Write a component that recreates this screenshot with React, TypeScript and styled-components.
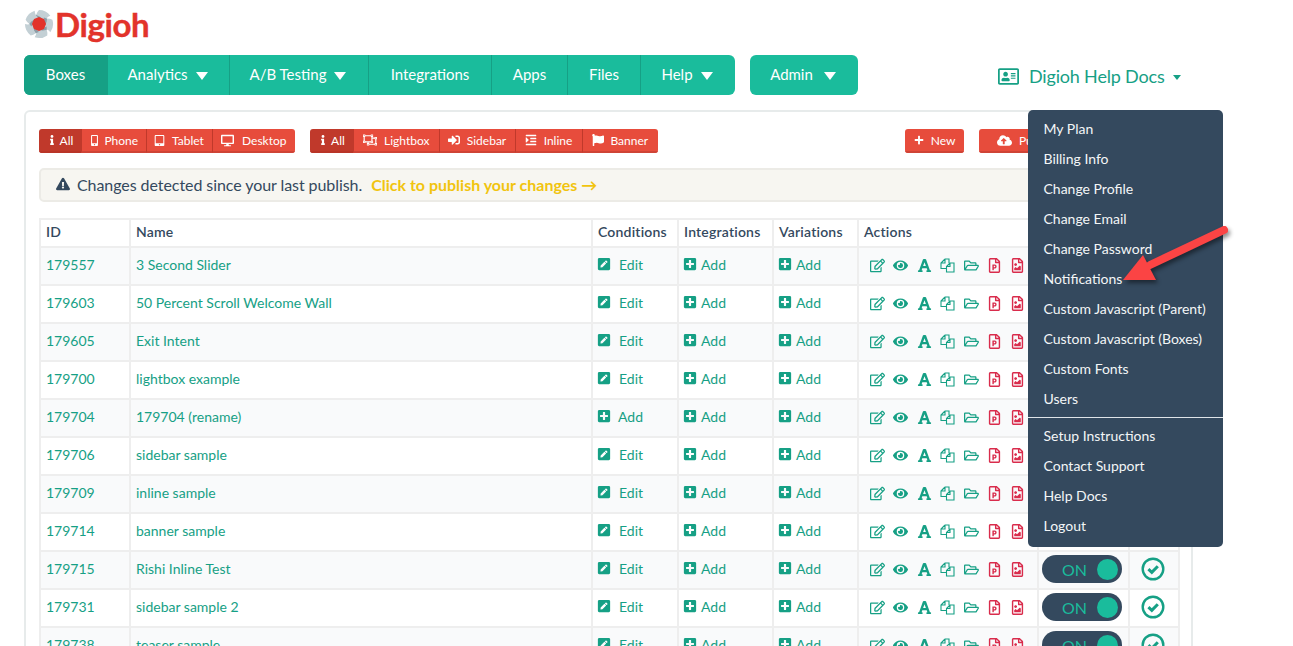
import React from 'react'
import styled, { createGlobalStyle } from 'styled-components'
import {
    FaCloudUploadAlt,
    FaDesktop,
    FaExclamationTriangle,
    FaEye,
    FaFlag,
    FaFont,
    FaIndent,
    FaInfo,
    FaMobileAlt,
    FaPenSquare,
    FaPlus,
    FaPlusSquare,
    FaRegAddressCard,
    FaRegEdit,
    FaRegFileImage,
    FaRegFilePowerpoint,
    FaRegFolderOpen,
    FaRegObjectUngroup,
    FaSignInAlt,
    FaTabletAlt,
} from 'react-icons/fa'

const GlobalStyle = createGlobalStyle`
    html, body {
        margin: 0;
        padding: 0;
        background: #fff;
        font-family: Lato, "Liberation Sans", sans-serif;
        color: #34495e;
    }
`

const Page = styled.div`
    position: relative;
    height: 646px;
    padding: 0 24px;
    overflow: hidden;
    box-sizing: border-box;
`

const LogoRow = styled.div`
    display: flex;
    align-items: center;
    height: 55px;
    gap: 1px;
    padding-bottom: 7px;
    box-sizing: border-box;
`

const LogoText = styled.span`
    font-size: 33px;
    font-weight: 700;
    color: #e2332b;
    letter-spacing: -0.4px;
    -webkit-text-stroke: 0.4px #e2332b;
`

const NavRow = styled.div`
    display: flex;
    height: 40px;
    margin-bottom: 15px;
`

const NavBar = styled.nav<{ $gap?: number }>`
    display: flex;
    margin-left: ${(props) => props.$gap ?? 0}px;
    border-radius: 6px;
    overflow: hidden;
    background: #1abc9c;
`

const NavItem = styled.a<{ $active?: boolean; $width: number; $gap?: number }>`
    display: flex;
    align-items: center;
    justify-content: center;
    gap: ${(props) => props.$gap ?? 8}px;
    width: ${(props) => props.$width}px;
    padding-bottom: 2px;
    box-sizing: border-box;
    font-size: 15px;
    color: #fff;
    background: ${(props) => (props.$active ? '#16a085' : 'transparent')};
    border-left: 1px solid ${(props) => (props.$active ? 'transparent' : '#16a085')};

    &:first-child {
        border-left: 0;
    }
`

const NavCaret = styled.span`
    width: 0;
    height: 0;
    margin-top: 3px;
    margin-right: 2px;
    border-left: 6px solid transparent;
    border-right: 6px solid transparent;
    border-top: 8px solid #fff;
`

const HelpWrap = styled.div`
    position: relative;
    display: flex;
    align-items: center;
    margin-left: 140px;
    padding-top: 2px;
    gap: 10px;
    color: #16a085;
    font-size: 18px;
    letter-spacing: -0.18px;
`

const HelpCaret = styled(NavCaret)`
    margin-left: -2px;
    margin-right: 0;
    margin-top: 2px;
    border-left-width: 4.5px;
    border-right-width: 4.5px;
    border-top: 5.5px solid #16a085;
`

const DropMenu = styled.ul`
    position: absolute;
    top: 55px;
    left: 30px;
    z-index: 3;
    width: 195px;
    height: 437px;
    margin: 0;
    padding: 4px 0 0;
    box-sizing: border-box;
    list-style: none;
    background: #34495e;
    border-radius: 5px;
    letter-spacing: 0;
`

const DropItem = styled.li`
    height: 30px;
    line-height: 30px;
    padding-left: 15.5px;
    font-size: 14px;
    color: #f3f6f7;
`

const DropDivider = styled.li`
    height: 1px;
    margin: 3px 0 3px;
    background: #dfe4e8;
`

const Panel = styled.section`
    width: 1169px;
    height: 560px;
    padding: 17px 13px;
    box-sizing: border-box;
    border: 2px solid #e7ebeb;
    border-radius: 6px;
`

const FilterRow = styled.div`
    display: flex;
    gap: 15px;
    margin-bottom: 15px;
`

const ButtonGroup = styled.div<{ $push?: number }>`
    display: flex;
    height: 24px;
    margin-left: ${(props) => props.$push ?? 0}px;
    border-radius: 3px;
    overflow: hidden;
`

const FilterButton = styled.a<{ $active?: boolean; $width: number; $gap?: number }>`
    display: flex;
    align-items: center;
    justify-content: center;
    gap: ${(props) => props.$gap ?? 7}px;
    width: ${(props) => props.$width}px;
    box-sizing: border-box;
    font-size: 12px;
    color: #fff;
    background: ${(props) => (props.$active ? '#c0392b' : '#e74c3c')};
    border-left: 1px solid #c0392b;
    border-bottom: 2px solid ${(props) => (props.$active ? '#b93527' : '#cf4436')};

    &:first-child {
        border-left: 0;
    }
`

const Notice = styled.div`
    display: flex;
    align-items: center;
    height: 34px;
    margin-bottom: 16px;
    padding: 0 0 2px 15px;
    gap: 7px;
    box-sizing: border-box;
    background: #f7f6f1;
    border: 2px solid #ecebe6;
    border-radius: 5px;
    font-size: 16px;
    letter-spacing: -0.07px;
`

const NoticeLink = styled.a`
    margin-left: 2px;
    font-weight: 700;
    letter-spacing: 0;
    color: #f1c40f;
`

const Grid = styled.table`
    width: 1139px;
    table-layout: fixed;
    border-collapse: collapse;
    font-size: 14px;

    th, td {
        border: 2px solid #eeeeee;
        padding: 0 5px;
        text-align: left;
        white-space: nowrap;
        box-sizing: border-box;
    }

    th {
        height: 28px;
        padding-bottom: 4px;
        font-weight: 600;
        letter-spacing: 0.2px;
        color: #34495e;
    }

    td {
        height: 38px;
        padding-bottom: 2px;
        color: #16a085;
    }

    tbody tr:nth-child(odd) td {
        background: #f9fafb;
    }
`

const RowText = styled.span`
    display: block;
    margin-bottom: 2px;
`

const CellLink = styled.span<{ $gap: number }>`
    display: inline-flex;
    align-items: center;
    gap: ${(props) => props.$gap}px;
    margin-left: -1px;
    color: #16a085;
    font-size: 14px;
`

const ActionList = styled.div`
    display: flex;
    align-items: center;
    gap: 8.4px;
    padding-left: 6px;
    font-size: 15px;
`

const ActionIcon = styled.span<{ $danger?: boolean }>`
    display: flex;
    color: ${(props) => (props.$danger ? '#d92c4c' : '#16a085')};
`

const Toggle = styled.div`
    display: flex;
    align-items: center;
    justify-content: space-between;
    width: 80px;
    height: 28px;
    margin-left: -2px;
    padding: 0 4px 0 20px;
    box-sizing: border-box;
    background: #34495e;
    border-radius: 14px;
    color: #1abc9c;
    font-size: 16px;
`

const Knob = styled.span`
    width: 21px;
    height: 21px;
    border-radius: 50%;
    background: #1abc9c;
`

const CheckCell = styled.div`
    display: flex;
    justify-content: center;
    padding-right: 3px;
`

const ArrowLayer = styled.svg`
    position: absolute;
    left: 1110px;
    top: 215px;
    z-index: 4;
    filter: drop-shadow(2px 3px 2px rgba(0, 0, 0, 0.45));
`

function LogoMark() {
    const blades = [0, 72, 144, 216, 288]
    return (
        <svg width="30" height="32" viewBox="0 0 32 32">
            {blades.map((angle) => (
                <g key={angle} transform={`rotate(${angle} 16 16)`}>
                    <path
                        d="M16 1 A15 15 0 0 1 28.1 7.2 Q23 9 21.5 15 Q20 8 13 6 Q14 3 16 1 Z"
                        fill="#c3d0d5"
                    />
                    <path d="M13 6 Q20 8 21.5 15 L19 16 Q18 10 11 9 Z" fill="#8c9ea8" />
                </g>
            ))}
            <polygon
                points="16,8.5 21.3,10.7 23.5,16 21.3,21.3 16,23.5 10.7,21.3 8.5,16 10.7,10.7"
                fill="#e2332b"
            />
        </svg>
    )
}

function CopyIcon() {
    return (
        <svg width="15" height="15" viewBox="0 0 15 15" fill="none" stroke="currentColor" strokeWidth="1.1">
            <path d="M5 1 H9 V5 M5 1 L1 5 V10.5 H6.5 M5 1 V5 H1" />
            <path d="M10 5 L6.5 8.5 V14 H14 V5 Z M10 5 V8.5 H6.5" />
        </svg>
    )
}

function CheckBadge() {
    return (
        <svg width="24" height="24" viewBox="0 0 24 24">
            <circle cx="12" cy="12" r="10.3" fill="none" stroke="#16a085" strokeWidth="2.4" />
            <polyline
                points="7.4,12.2 10.8,15.4 16.8,9.2"
                fill="none"
                stroke="#16a085"
                strokeWidth="3"
            />
        </svg>
    )
}

const rows: { id: number; name: string; addCondition?: boolean }[] = [
    { id: 179557, name: '3 Second Slider' },
    { id: 179603, name: '50 Percent Scroll Welcome Wall' },
    { id: 179605, name: 'Exit Intent' },
    { id: 179700, name: 'lightbox example' },
    { id: 179704, name: '179704 (rename)', addCondition: true },
    { id: 179706, name: 'sidebar sample' },
    { id: 179709, name: 'inline sample' },
    { id: 179714, name: 'banner sample' },
    { id: 179715, name: 'Rishi Inline Test' },
    { id: 179731, name: 'sidebar sample 2' },
    { id: 179738, name: 'teaser sample' },
]

const menuTop = [
    'My Plan',
    'Billing Info',
    'Change Profile',
    'Change Email',
    'Change Password',
    'Notifications',
    'Custom Javascript (Parent)',
    'Custom Javascript (Boxes)',
    'Custom Fonts',
    'Users',
]

const menuBottom = ['Setup Instructions', 'Contact Support', 'Help Docs', 'Logout']

export default function App(): JSX.Element {
    return (
        <Page>
            <GlobalStyle />
            <LogoRow>
                <LogoMark />
                <LogoText>Digioh</LogoText>
            </LogoRow>
            <NavRow>
                <NavBar>
                    <NavItem $active $width={83}>Boxes</NavItem>
                    <NavItem $width={122}>Analytics <NavCaret /></NavItem>
                    <NavItem $width={139}>A/B Testing <NavCaret /></NavItem>
                    <NavItem $width={123}>Integrations</NavItem>
                    <NavItem $width={76}>Apps</NavItem>
                    <NavItem $width={73}>Files</NavItem>
                    <NavItem $width={95}>Help <NavCaret /></NavItem>
                </NavBar>
                <NavBar $gap={15}>
                    <NavItem $width={108} $gap={11}>Admin <NavCaret /></NavItem>
                </NavBar>
                <HelpWrap>
                    <FaRegAddressCard size={21} />
                    Digioh Help Docs
                    <HelpCaret />
                    <DropMenu>
                        {menuTop.map((label) => (
                            <DropItem key={label}>{label}</DropItem>
                        ))}
                        <DropDivider />
                        {menuBottom.map((label) => (
                            <DropItem key={label}>{label}</DropItem>
                        ))}
                    </DropMenu>
                </HelpWrap>
            </NavRow>
            <Panel>
                <FilterRow>
                    <ButtonGroup>
                        <FilterButton $active $width={42} $gap={3}><FaInfo size={10} /> All</FilterButton>
                        <FilterButton $width={64.5} $gap={4}><FaMobileAlt size={11} /> Phone</FilterButton>
                        <FilterButton $width={66}><FaTabletAlt size={11} /> Tablet</FilterButton>
                        <FilterButton $width={83.5} $gap={8}><FaDesktop size={13} /> Desktop</FilterButton>
                    </ButtonGroup>
                    <ButtonGroup>
                        <FilterButton $active $width={43} $gap={3}><FaInfo size={10} /> All</FilterButton>
                        <FilterButton $width={85.5}><FaRegObjectUngroup size={14} /> Lightbox</FilterButton>
                        <FilterButton $width={76}><FaSignInAlt size={12} /> Sidebar</FilterButton>
                        <FilterButton $width={67}><FaIndent size={12} /> Inline</FilterButton>
                        <FilterButton $width={76.5} $gap={6}><FaFlag size={12} /> Banner</FilterButton>
                    </ButtonGroup>
                    <ButtonGroup $push={232}>
                        <FilterButton $width={59}><FaPlus size={10} /> New</FilterButton>
                    </ButtonGroup>
                    <ButtonGroup>
                        <FilterButton $width={96}><FaCloudUploadAlt size={15} /> Publish</FilterButton>
                    </ButtonGroup>
                </FilterRow>
                <Notice>
                    <FaExclamationTriangle size={14} />
                    Changes detected since your last publish.
                    <NoticeLink>Click to publish your changes →</NoticeLink>
                </Notice>
                <Grid>
                    <colgroup>
                        <col width={90} />
                        <col width={462} />
                        <col width={86} />
                        <col width={95} />
                        <col width={85} />
                        <col width={180} />
                        <col width={91} />
                        <col width={50} />
                    </colgroup>
                    <thead>
                        <tr>
                            <th>ID</th>
                            <th>Name</th>
                            <th>Conditions</th>
                            <th>Integrations</th>
                            <th>Variations</th>
                            <th>Actions</th>
                            <th />
                            <th />
                        </tr>
                    </thead>
                    <tbody>
                        {rows.map((row) => (
                            <tr key={row.id}>
                                <td><RowText>{row.id}</RowText></td>
                                <td><RowText>{row.name}</RowText></td>
                                <td>
                                    {row.addCondition ? (
                                        <CellLink $gap={7}><FaPlusSquare size={14} /> Add</CellLink>
                                    ) : (
                                        <CellLink $gap={8}><FaPenSquare size={14} /> Edit</CellLink>
                                    )}
                                </td>
                                <td><CellLink $gap={4}><FaPlusSquare size={14} /> Add</CellLink></td>
                                <td><CellLink $gap={4}><FaPlusSquare size={14} /> Add</CellLink></td>
                                <td>
                                    <ActionList>
                                        <ActionIcon><FaRegEdit /></ActionIcon>
                                        <ActionIcon><FaEye /></ActionIcon>
                                        <ActionIcon><FaFont /></ActionIcon>
                                        <ActionIcon><CopyIcon /></ActionIcon>
                                        <ActionIcon><FaRegFolderOpen /></ActionIcon>
                                        <ActionIcon $danger><FaRegFilePowerpoint /></ActionIcon>
                                        <ActionIcon $danger><FaRegFileImage /></ActionIcon>
                                    </ActionList>
                                </td>
                                <td><Toggle>ON <Knob /></Toggle></td>
                                <td><CheckCell><CheckBadge /></CheckCell></td>
                            </tr>
                        ))}
                    </tbody>
                </Grid>
            </Panel>
            <ArrowLayer width="125" height="75" viewBox="0 0 125 75">
                <line x1="114" y1="15" x2="40" y2="50" stroke="#fb4444" strokeWidth="8" strokeLinecap="round" />
                <polygon points="13,65 33,40 46,65" fill="#fb4444" />
            </ArrowLayer>
        </Page>
    )
}
